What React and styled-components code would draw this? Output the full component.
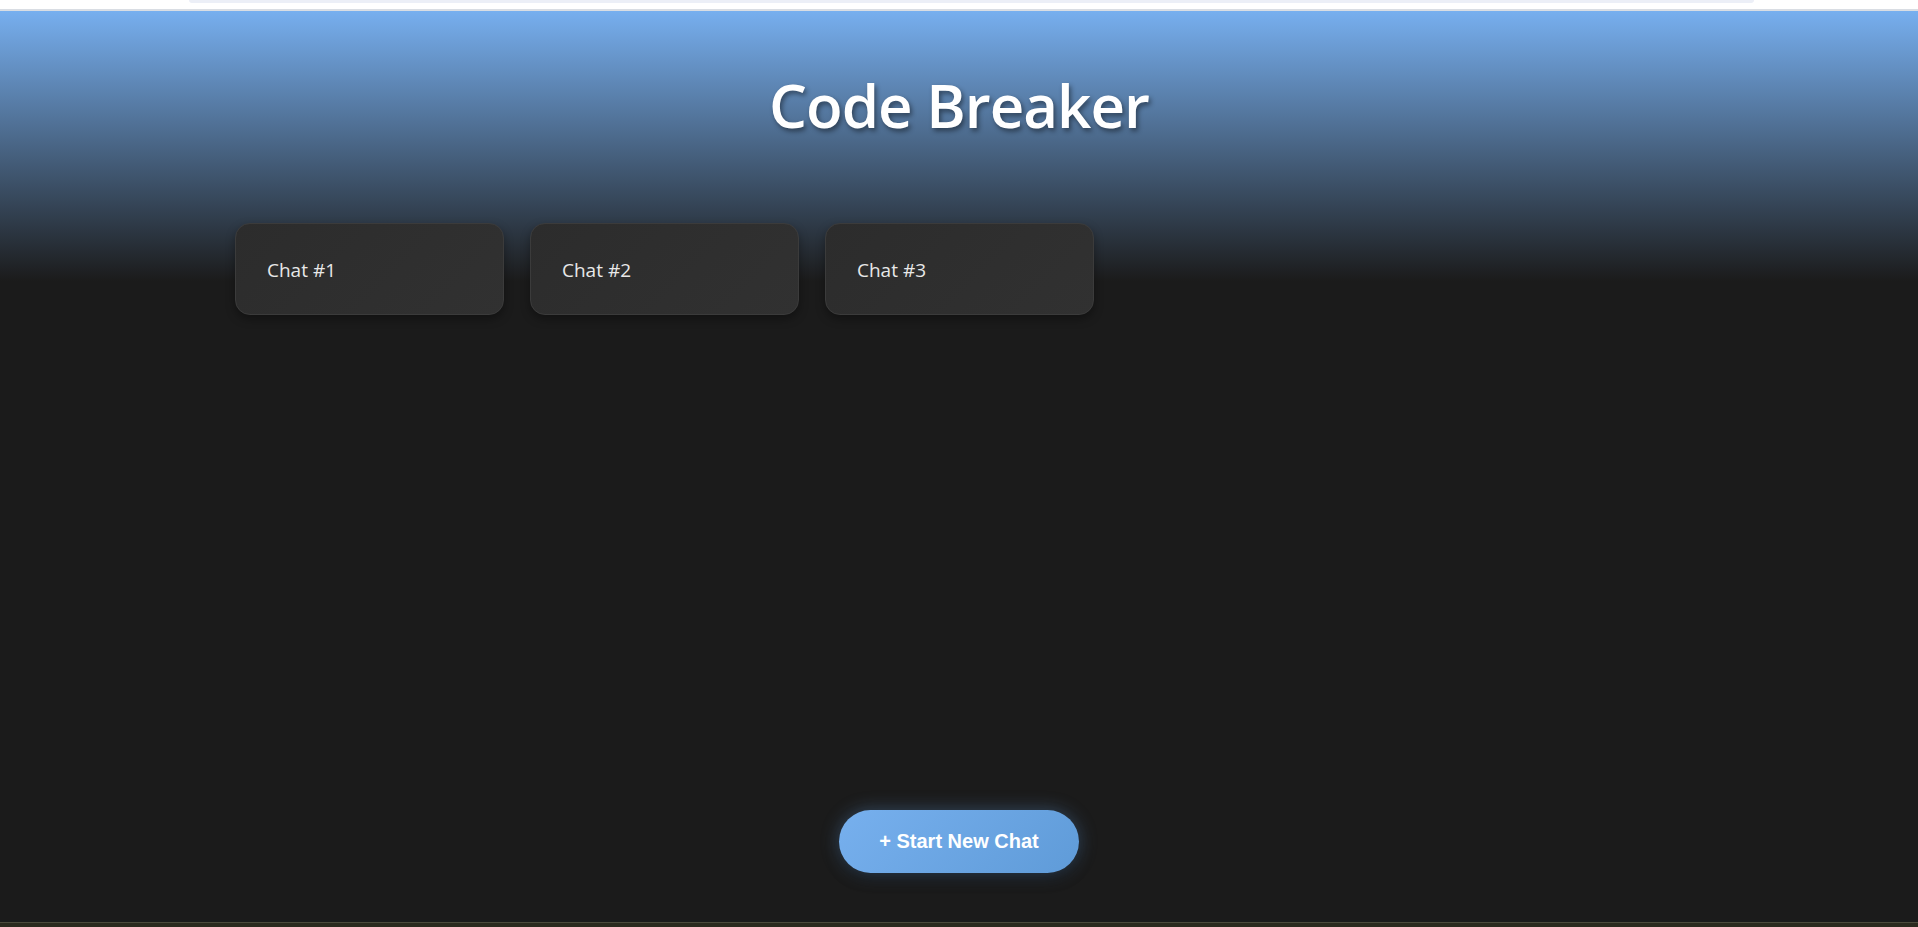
import React from "react";
import styled, { createGlobalStyle } from "styled-components";

const GlobalStyle = createGlobalStyle`
  html, body { margin: 0; padding: 0; height: 100%; }
  body { background: #1b1b1b; font-family: "Open Sans", "Noto Sans", sans-serif; }
  #root { min-height: 100vh; }
  * { box-sizing: border-box; }
`;

const Page = styled.div`
  min-height: 100vh;
  display: flex;
  flex-direction: column;
  background: #1b1b1b;
`;

const BrowserStrip = styled.div`
  height: 11px;
  flex: none;
  background: #ffffff;
  border-bottom: 2px solid #d9dde3;
  display: flex;
  justify-content: center;
`;

const StripTab = styled.div`
  width: 1565px;
  height: 3px;
  margin-left: 25px;
  background: #eceff7;
  border-radius: 0 0 6px 6px;
`;

const Main = styled.main`
  flex: 1;
  display: flex;
  flex-direction: column;
  background: linear-gradient(to bottom, #77afef 0px, #1b1b1b 270px) no-repeat, #1b1b1b;
`;

const Title = styled.h1`
  margin: 0;
  padding-top: 51px;
  text-align: center;
  font-family: "Open Sans", "Noto Sans", sans-serif;
  font-weight: 600;
  font-size: 60px;
  letter-spacing: -1px;
  line-height: 86px;
  color: #ffffff;
  text-shadow: 2px 3px 5px rgba(0, 0, 0, 0.45);
`;

const ChatGrid = styled.div`
  display: flex;
  gap: 26px;
  padding: 0 235px;
  margin-top: 75px;
`;

const ChatCard = styled.div`
  width: 269px;
  height: 92px;
  display: flex;
  align-items: center;
  padding: 2px 0 0 31px;
  border-radius: 15px;
  border: 1px solid #3b3b3b;
  background: linear-gradient(135deg, #2c2c2c 0%, #313131 100%);
  box-shadow: 0 4px 10px rgba(0, 0, 0, 0.35);
  color: #e8e8e8;
  font-family: "Open Sans", "Noto Sans", sans-serif;
  font-size: 19px;
  cursor: pointer;
`;

const Spacer = styled.div`
  flex: 1;
`;

const NewChatButton = styled.button`
  align-self: center;
  margin-bottom: 49px;
  height: 63px;
  padding: 0 40px;
  border: none;
  border-radius: 32px;
  background: linear-gradient(135deg, #77b0ee 0%, #5f9bd8 100%);
  box-shadow: 0 0 18px rgba(110, 170, 235, 0.35), 0 6px 14px rgba(0, 0, 0, 0.4);
  color: #ffffff;
  font-family: "Liberation Sans", Arial, sans-serif;
  font-weight: 700;
  font-size: 20px;
  cursor: pointer;
`;

const BottomStrip = styled.div`
  height: 5px;
  flex: none;
  border-top: 1px solid #4b4a3c;
  background: #2b2a1e;
`;

const chats = ["Chat #1", "Chat #2", "Chat #3"];

export default function App() {
  return (
    <>
      <GlobalStyle />
      <Page>
        <BrowserStrip>
          <StripTab />
        </BrowserStrip>
        <Main>
          <Title>Code Breaker</Title>
          <ChatGrid>
            {chats.map((c) => (
              <ChatCard key={c}>{c}</ChatCard>
            ))}
          </ChatGrid>
          <Spacer />
          <NewChatButton>+ Start New Chat</NewChatButton>
        </Main>
        <BottomStrip />
      </Page>
    </>
  );
}
